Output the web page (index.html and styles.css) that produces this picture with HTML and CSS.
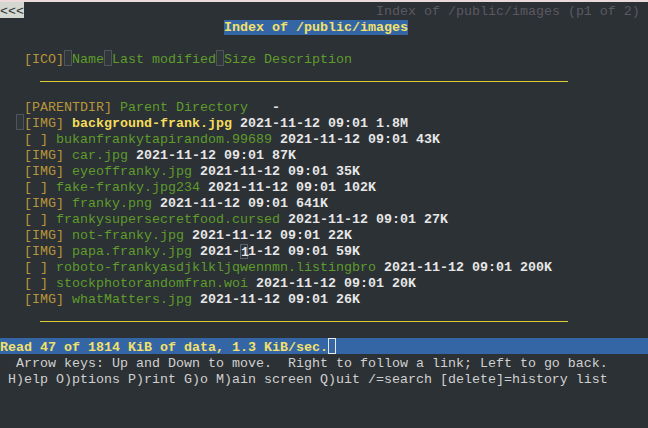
FILE: index.html
```html
<!DOCTYPE html>
<html>
<head>
<meta charset="utf-8">
<link rel="stylesheet" href="styles.css">
</head>
<body>
<div class="topstrip"></div>
<div class="screen">
  <div class="row"><span class="back">&lt;&lt;&lt;</span>                                            <span class="dim">Index of /public/images (p1 of 2)</span></div>
  <div class="row">                            <span class="title">Index of /public/images</span></div>
  <div class="row"></div>
  <div class="row">   <span class="tag">[ICO]</span><span class="cell"> </span><span class="lnk">Name</span><span class="cell"> </span><span class="lnk">Last modified</span><span class="cell"> </span><span class="lnk">Size Description</span></div>
  <div class="hr"></div>
  <div class="row"></div>
  <div class="row">   <span class="tag">[PARENTDIR]</span> <span class="lnk">Parent Directory</span>   <span class="dat">-</span></div>
  <div class="row">  <span class="cell"> </span><span class="tag">[IMG]</span> <span class="sel">background-frank.jpg</span> <span class="dat">2021-11-12 09:01 1.8M</span></div>
  <div class="row">   <span class="tag">[ ]</span> <span class="lnk">bukanfrankytapirandom.99689</span> <span class="dat">2021-11-12 09:01 43K</span></div>
  <div class="row">   <span class="tag">[IMG]</span> <span class="lnk">car.jpg</span> <span class="dat">2021-11-12 09:01 87K</span></div>
  <div class="row">   <span class="tag">[IMG]</span> <span class="lnk">eyeoffranky.jpg</span> <span class="dat">2021-11-12 09:01 35K</span></div>
  <div class="row">   <span class="tag">[ ]</span> <span class="lnk">fake-franky.jpg234</span> <span class="dat">2021-11-12 09:01 102K</span></div>
  <div class="row">   <span class="tag">[IMG]</span> <span class="lnk">franky.png</span> <span class="dat">2021-11-12 09:01 641K</span></div>
  <div class="row">   <span class="tag">[ ]</span> <span class="lnk">frankysupersecretfood.cursed</span> <span class="dat">2021-11-12 09:01 27K</span></div>
  <div class="row">   <span class="tag">[IMG]</span> <span class="lnk">not-franky.jpg</span> <span class="dat">2021-11-12 09:01 22K</span></div>
  <div class="row">   <span class="tag">[IMG]</span> <span class="lnk">papa.franky.jpg</span> <span class="dat">2021-<span class="cellc">1</span>1-12 09:01 59K</span></div>
  <div class="row">   <span class="tag">[ ]</span> <span class="lnk">roboto-frankyasdjklkljqwennmn.listingbro</span> <span class="dat">2021-11-12 09:01 200K</span></div>
  <div class="row">   <span class="tag">[ ]</span> <span class="lnk">stockphotorandomfran.woi</span> <span class="dat">2021-11-12 09:01 20K</span></div>
  <div class="row">   <span class="tag">[IMG]</span> <span class="lnk">whatMatters.jpg</span> <span class="dat">2021-11-12 09:01 26K</span></div>
  <div class="hr"></div>
  <div class="row"></div>
  <div class="row status">Read 47 of 1814 KiB of data, 1.3 KiB/sec.<span class="cursor"> </span></div>
  <div class="row help">  Arrow keys: Up and Down to move.  Right to follow a link; Left to go back.</div>
  <div class="row help"> H)elp O)ptions P)rint G)o M)ain screen Q)uit /=search [delete]=history list</div>
</div>
</body>
</html>
```

FILE: styles.css
```css
html, body {
  margin: 0;
  padding: 0;
  background: #2c3135;
  width: 648px;
  height: 428px;
  overflow: hidden;
}
.topstrip {
  height: 2px;
  background: #ecd9d9;
}
.screen {
  font-family: "Liberation Mono", "Courier New", monospace;
  font-size: 13.333px;
  color: #dcdcdc;
}
.row {
  height: 16px;
  line-height: 20px;
  white-space: pre;
}
.back {
  display: inline-block;
  height: 16px;
  vertical-align: top;
  background: #d3d7cf;
  color: #2c3135;
}
.dim {
  color: #5c5862;
}
.title {
  background: #3465a4;
  color: #f2e06a;
  font-weight: bold;
}
.tag {
  color: #b8953a;
}
.lnk {
  color: #5e9c2c;
}
.sel {
  color: #f4dc5c;
  font-weight: bold;
}
.dat {
  color: #e6e6e6;
  font-weight: bold;
}
.cell, .cellc {
  display: inline-block;
  width: 8px;
  height: 16px;
  line-height: 20px;
  box-sizing: border-box;
  border: 1px solid #4d555b;
  vertical-align: top;
}
.cell {
  background: #30363a;
}
.cellc {
  border-color: #596067;
  line-height: 16px;
  height: 15px;
  margin-top: 2px;
}
.hr {
  width: 528px;
  height: 15px;
  margin-left: 40px;
  border-bottom: 1px solid #e0cc30;
}
.status {
  background: #3465a4;
  color: #f2e06a;
  font-weight: bold;
}
.cursor {
  display: inline-block;
  width: 8px;
  height: 16px;
  box-sizing: border-box;
  border: 1px solid #e8e8e8;
  vertical-align: top;
}
.help {
  color: #d0d0d0;
}
```
